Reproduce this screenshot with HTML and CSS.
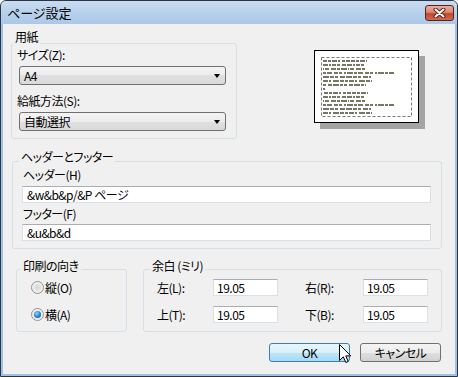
FILE: index.html
```html
<!DOCTYPE html>
<html>
<head>
    <title>ページ設定</title>
    <link rel="stylesheet" href="styles.css">
</head>
<body>
<div class="window">
    <div class="titlebar">
        <span class="title">ページ設定</span>
        <span class="close">
            <svg width="13" height="10" viewBox="0 0 13 10">
                <path d="M2.5 1.5 L10.5 8.5 M10.5 1.5 L2.5 8.5" stroke="#5a2318" stroke-width="4" stroke-linecap="round"/>
                <path d="M2.5 1.5 L10.5 8.5 M10.5 1.5 L2.5 8.5" stroke="#fff" stroke-width="2" stroke-linecap="round"/>
            </svg>
        </span>
    </div>

    <div class="client">
        <div class="top">
            <div class="group paper">
                <div class="group-title">用紙</div>
                <div class="field-label">サイズ(Z):</div>
                <div class="select"><span>A4</span><span class="arrow"></span></div>
                <div class="field-label">給紙方法(S):</div>
                <div class="select"><span>自動選択</span><span class="arrow"></span></div>
            </div>

            <div class="preview">
                <svg width="103" height="71" viewBox="0 0 103 71">
                    <rect x="6.5" y="6.5" width="90" height="59" fill="none" stroke="#7a7a7a" stroke-dasharray="3 2"/>
                    <g stroke="#55553f" stroke-width="2" opacity="0.8">
                        <path d="M8 10h44" stroke-dasharray="4 1 3 1 5 1 2 2 3 1 4 1"/>
                        <path d="M8 14h41" stroke-dasharray="5 1 2 1 4 1 3 2 4 1"/>
                        <path d="M8 18h42" stroke-dasharray="1 1 4 2 5 1 3 1 6 1"/>
                        <path d="M8 22h71" stroke-dasharray="3 1 5 2 4 1 3 2 2 1 6 1"/>
                        <path d="M8 26h48" stroke-dasharray="6 1 4 1 3 2 5 1"/>
                        <path d="M8 30h49" stroke-dasharray="5 1 2 2 6 1 4 1 3 1"/>
                        <path d="M8 34h43" stroke-dasharray="3 2 4 1 6 1 3 1"/>
                        <path d="M8 38h2"/>
                        <path d="M9 42h44" stroke-dasharray="4 1 3 1 5 1 2 2 3 1 4 1"/>
                        <path d="M8 46h41" stroke-dasharray="5 1 2 1 4 1 3 2 4 1"/>
                        <path d="M8 50h42" stroke-dasharray="1 1 4 2 5 1 3 1 6 1"/>
                        <path d="M8 54h71" stroke-dasharray="3 1 5 2 4 1 3 2 2 1 6 1"/>
                        <path d="M8 58h48" stroke-dasharray="6 1 4 1 3 2 5 1"/>
                        <path d="M8 62h49" stroke-dasharray="5 1 2 2 6 1 4 1 3 1"/>
                    </g>
                </svg>
            </div>
        </div>

        <div class="group hf">
            <div class="group-title">ヘッダーとフッター</div>
            <div class="field-label">ヘッダー(H)</div>
            <div class="input">&amp;w&amp;b&amp;p/&amp;P ページ</div>
            <div class="field-label">フッター(F)</div>
            <div class="input">&amp;u&amp;b&amp;d</div>
        </div>

        <div class="bottom">
            <div class="group orient">
                <div class="group-title">印刷の向き</div>
                <div class="radio-row"><span class="radio"></span>縦(O)</div>
                <div class="radio-row"><span class="radio checked"></span>横(A)</div>
            </div>

            <div class="group margins">
                <div class="group-title">余白 (ミリ)</div>
                <div class="margin-grid">
                    <span>左(L):</span>
                    <div class="input small">19.05</div>
                    <span class="right-label">右(R):</span>
                    <div class="input small">19.05</div>
                    <span>上(T):</span>
                    <div class="input small">19.05</div>
                    <span class="right-label">下(B):</span>
                    <div class="input small">19.05</div>
                </div>
            </div>
        </div>

        <div class="buttons">
            <button class="btn ok">OK</button>
            <button class="btn">キャンセル</button>
        </div>
    </div>

    <svg class="cursor" width="13" height="20" viewBox="0 0 13 20">
        <path d="M0.5 0.5 L0.5 16.5 L4.3 12.8 L6.8 18.5 L9.2 17.5 L6.8 11.9 L11.8 11.9 Z" fill="#fff" stroke="#000" stroke-width="1" stroke-linejoin="miter"/>
    </svg>
</div>
</body>
</html>
```

FILE: styles.css
```css
body { margin: 0; background: #fff; font-family: "Noto Sans CJK JP", "Noto Sans", sans-serif; font-size: 12px; color: #000; font-feature-settings: "palt"; letter-spacing: -0.5px; }

.window { position: relative; width: 458px; height: 377px; box-sizing: border-box; border: 1px solid #2e3540; border-radius: 6px 6px 0 0; background: #9fc1e6; display: flex; flex-direction: column; overflow: hidden; }
.titlebar { height: 23px; flex: none; display: flex; justify-content: space-between; align-items: flex-start; background: linear-gradient(#c8dcf1, #b8d1ec 50%, #abc8e8); }
.title { padding: 4px 0 0 6px; line-height: 16px; font-size: 13px; letter-spacing: 0; }
.close { width: 29px; height: 16px; margin: 4px 3px 0 0; box-sizing: border-box; border: 1px solid #5e2117; border-radius: 3px; background: linear-gradient(#eaae9f, #d98772 45%, #c4462e 55%, #cf6a51); display: flex; align-items: center; justify-content: center; }

.client { flex: 1; margin: 0 2px 2px; padding: 0 13px 0 8px; background: #f0f0f0; }

.group { border: 1px solid #d5dfe5; border-radius: 3px; }
.group-title { width: fit-content; line-height: 14px; padding: 0 2px; background: #f0f0f0; }
.field-label { line-height: 14px; margin-top: 4px; }

.top { display: flex; align-items: flex-start; }
.paper { width: 226px; box-sizing: border-box; margin-top: 19px; padding: 0 10px 7px 7px; }
.paper .group-title { margin: -14px 0 0 -6px; }
.paper .field-label { margin-left: -2px; }
.select + .field-label { margin-top: 9px; }
.select { height: 19px; margin-top: 4px; box-sizing: border-box; display: flex; align-items: center; justify-content: space-between; padding: 0 5px 0 4px; border: 1px solid #707070; border-radius: 3px; background: linear-gradient(#f4f4f4, #ececec 50%, #e0e0e0 50%, #d9d9d9); }
.arrow { width: 0; height: 0; border-left: 3.5px solid transparent; border-right: 3.5px solid transparent; border-top: 4px solid #000; }

.preview { width: 105px; height: 73px; box-sizing: border-box; margin: 26px 0 0 77px; border: 1px solid #000; background: #fff; box-shadow: 6px 6px 0 #a4a4a4; }
.preview svg { display: block; }

.input { height: 17px; box-sizing: border-box; padding: 0 4px; line-height: 15px; background: #fff; border: 1px solid #dbdfe6; border-top-color: #abadb3; }
.hf { margin: 22px 0 0 1px; padding: 0 10px 7px 9px; }
.hf .group-title { margin: -12px 0 0 -3px; }
.hf .field-label { margin-left: 1px; }
.hf .input { margin-top: 4px; }
.hf .input + .field-label + .input { margin-top: 3px; }

.bottom { display: flex; margin-top: 20px; }
.orient { width: 111px; box-sizing: border-box; margin-left: 5px; padding: 0 0 9px 14px; }
.orient .group-title { margin: -11px 0 0 -10px; }
.radio-row { height: 16px; display: flex; align-items: center; margin-top: 6px; }
.radio-row + .radio-row { margin-top: 11px; }
.radio { width: 13px; height: 13px; box-sizing: border-box; margin-right: 1px; border: 1px solid #929292; border-radius: 50%; background: radial-gradient(circle, #d6d6d6 0, #e6e6e6 45%, #f6f6f6 75%); display: flex; align-items: center; justify-content: center; }
.radio.checked::after { content: ""; width: 7px; height: 7px; border-radius: 50%; background: radial-gradient(circle at 40% 35%, #9fd4f6 0, #2f8fd8 45%, #0d4e95 100%); }

.margins { flex: 1; margin-left: 16px; padding: 0 13px 8px; }
.margins .group-title { margin: -11px 0 0 -7px; }
.margin-grid { display: grid; grid-template-columns: 56px 65px 1fr 65px; grid-template-rows: 17px 17px; row-gap: 10px; align-items: center; margin-top: 6px; }
.input.small { padding: 0 3px; }
.right-label { padding-left: 27px; }

.buttons { display: flex; justify-content: flex-end; gap: 10px; margin-top: 11px; padding-right: 1px; }
.btn { width: 81px; height: 19px; padding: 0; font-family: inherit; font-size: 12px; font-feature-settings: "palt"; letter-spacing: -0.5px; color: #000; border: 1px solid #707070; border-radius: 3px; background: linear-gradient(#f4f4f4, #ececec 50%, #dedede 50%, #d2d2d2); }
.btn.ok { border-color: #3c7fb1; background: linear-gradient(#eaf6fd, #d9f0fc 50%, #bee6fd 50%, #a7d9f5); }

.cursor { position: absolute; left: 338px; top: 343px; }
```
